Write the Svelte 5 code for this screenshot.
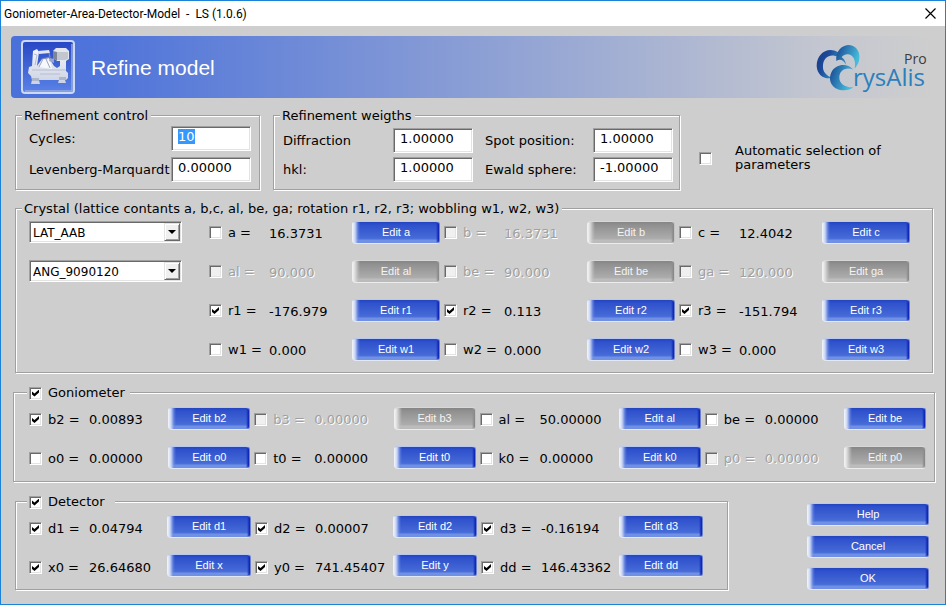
<script>
  import { onMount } from 'svelte';

  let cyclesInput;

  onMount(() => {
    cyclesInput.focus();
    cyclesInput.select();
  });

  const p = (name, value, checked = false, disabled = false, edit = name) => ({
    name, value, checked, disabled, edit
  });

  const crystal = [
    p('a', '16.3731'), p('b', '16.3731', false, true), p('c', '12.4042'),
    p('al', '90.000', false, true), p('be', '90.000', false, true), p('ga', '120.000', false, true),
    p('r1', '-176.979', true), p('r2', '0.113', true), p('r3', '-151.794', true),
    p('w1', '0.000'), p('w2', '0.000'), p('w3', '0.000')
  ];

  const goniometer = [
    p('b2', '0.00893', true), p('b3', '0.00000', false, true), p('al', '50.00000'), p('be', '0.00000'),
    p('o0', '0.00000'), p('t0', '0.00000'), p('k0', '0.00000'), p('p0', '0.00000', false, true)
  ];

  const detector = [
    p('d1', '0.04794', true), p('d2', '0.00007', true), p('d3', '-0.16194', true),
    p('x0', '26.64680', true, false, 'x'), p('y0', '741.45407', true, false, 'y'), p('dd', '146.43362', true)
  ];
</script>

{#snippet params(list)}
  {#each list as item}
    <div class="param" class:off={item.disabled}>
      <label>
        <input type="checkbox" checked={item.checked} disabled={item.disabled} />
        <span>{item.name} =</span>
      </label>
      <span class="value">{item.value}</span>
      <button type="button" class="btn" disabled={item.disabled}>Edit {item.edit}</button>
    </div>
  {/each}
{/snippet}

<div class="window">
  <div class="titlebar">
    <span class="title">Goniometer-Area-Detector-Model&nbsp; -&nbsp; LS (1.0.6)</span>
    <button type="button" class="close" aria-label="Close">
      <svg width="11" height="11" viewBox="0 0 11 11"><path d="M.5 .5l10 10M10.5 .5l-10 10" stroke="#000" stroke-width="1.2" fill="none" /></svg>
    </button>
  </div>

  <header>
    <svg class="device" width="54" height="54" viewBox="0 0 54 54" aria-hidden="true">
      <defs>
        <linearGradient id="tile" x1="0" y1="0" x2="0" y2="1">
          <stop offset="0" stop-color="#2747c4" />
          <stop offset="1" stop-color="#5b83e6" />
        </linearGradient>
        <linearGradient id="metal" x1="0" y1="0" x2="0" y2="1">
          <stop offset="0" stop-color="#f4f5f9" />
          <stop offset="1" stop-color="#ccd2e2" />
        </linearGradient>
      </defs>
      <rect x="1" y="1" width="52" height="52" rx="3" fill="url(#tile)" stroke="#ccd8f4" stroke-width="2" />
      <path d="M51 4v47H4" fill="none" stroke="#97a9dc" stroke-width="1.5" />
      <path d="M8 27l3-1 1-15 4-2 2 3-2 14 5-7 7-1 5 8 3 2 3-2v-5h6v10l2 2v5l-2 2h-1l1 3h-8l1-3H18l1 4h-9l1-4-1-4-3-3z" fill="url(#metal)" />
      <path d="M11 38h7v3H11zM38 37h7v3h-7z" fill="#aeb6cb" />
      <path d="M17 11l11-1 1 3-11 1z" fill="#dfe4f0" />
      <path d="M28 13l1 4-8 2" fill="none" stroke="#7f8bb0" stroke-width="1.2" />
      <path d="M18 27l4-8 7 1 2 9z" fill="#f7f8fb" />
      <path d="M22 19l-4 8M25 19l4 9" stroke="#9ba5c2" fill="none" />
      <path d="M32 11l3-3h10l3 3v8l-3 2H36l-4-3z" fill="#e4e6ec" />
      <path d="M32 11l4 1v9l-4-3z" fill="#7d8598" />
      <path d="M36 12h11v7l-3 1h-8z" fill="#c2c6cf" />
      <path d="M29 18l4 1v4l-5-2z" fill="#9aa5c8" />
      <path d="M11 30h34M19 34h20" stroke="#b6bdd1" fill="none" />
      <path d="M13 14l3 1-2 10" stroke="#b4bcd0" fill="none" />
    </svg>
    <h1>Refine model</h1>
    <svg class="logo" width="120" height="56" viewBox="0 0 120 56" role="img" aria-label="CrysAlis Pro">
      <defs>
        <linearGradient id="swirl-a" x1="0" y1="0" x2="1" y2="0.6">
          <stop offset="0" stop-color="#173a86" />
          <stop offset="0.5" stop-color="#1d4c9a" />
          <stop offset="1" stop-color="#2f93c9" />
        </linearGradient>
        <linearGradient id="swirl-b" x1="0" y1="0" x2="1" y2="0.4">
          <stop offset="0" stop-color="#17438f" />
          <stop offset="1" stop-color="#46bcdc" />
        </linearGradient>
      </defs>
      <g transform="scale(0.3333)">
        <path d="M84 40C54 20 20 44 20 80c1 26 20 42 48 37C48 110 37 98 39 78C41 54 62 42 84 54z" fill="url(#swirl-a)" />
        <path d="M79 66C76 38 94 18 118 18c34 4 40 46 16 71C139 62 128 46 113 46C104 46 98 50 95 55C102 60 107 66 108 77C100 64 91 58 79 66z" fill="url(#swirl-b)" />
        <path d="M130 92C110 70 78 76 65 98c-14 28 3 56 38 56c11 0 20-3 27-9C104 146 87 133 88 114C89 94 108 82 130 92z" fill="url(#swirl-b)" />
      </g>
      <text x="94" y="25" font-size="14" fill="#3c3c3c">Pro</text>
      <text x="43" y="47" font-size="24" fill="#2a80bd">rysAlis</text>
    </svg>
  </header>

  <main>
    <div class="top">
      <fieldset class="control">
        <legend>Refinement control</legend>
        <div class="fields">
          <label for="cycles">Cycles:</label>
          <input id="cycles" type="text" value="10" bind:this={cyclesInput} />
          <label for="lm">Levenberg-Marquardt</label>
          <input id="lm" type="text" value="0.00000" />
        </div>
      </fieldset>

      <fieldset class="weights">
        <legend>Refinement weigths</legend>
        <div class="fields">
          <label for="diffraction">Diffraction</label>
          <input id="diffraction" type="text" value="1.00000" />
          <label for="spot">Spot position:</label>
          <input id="spot" type="text" value="1.00000" />
          <label for="hkl">hkl:</label>
          <input id="hkl" type="text" value="1.00000" />
          <label for="ewald">Ewald sphere:</label>
          <input id="ewald" type="text" value="-1.00000" />
        </div>
      </fieldset>

      <label class="auto">
        <input type="checkbox" />
        <span>Automatic selection of parameters</span>
      </label>
    </div>

    <fieldset class="crystal">
      <legend>Crystal (lattice contants a, b,c, al, be, ga; rotation r1, r2, r3; wobbling w1, w2, w3)</legend>
      <div class="crystal-body">
        <div class="combos">
          <span class="combo">
            <select aria-label="Lattice constraint"><option>LAT_AAB</option></select>
          </span>
          <span class="combo">
            <select aria-label="Angle constraint"><option>ANG_9090120</option></select>
          </span>
        </div>
        <div class="params three">{@render params(crystal)}</div>
      </div>
    </fieldset>

    <fieldset class="goniometer">
      <legend><label><input type="checkbox" checked /><span>Goniometer</span></label></legend>
      <div class="params four">{@render params(goniometer)}</div>
    </fieldset>

    <div class="bottom">
      <fieldset class="detector">
        <legend><label><input type="checkbox" checked /><span>Detector</span></label></legend>
        <div class="params three">{@render params(detector)}</div>
      </fieldset>
      <div class="actions">
        <button type="button" class="btn">Help</button>
        <button type="button" class="btn">Cancel</button>
        <button type="button" class="btn">OK</button>
      </div>
    </div>
  </main>
</div>

<style>
  :global(body) {
    margin: 0;
    background: #cecece;
  }

  .window {
    box-sizing: border-box;
    min-height: 100vh;
    border: 1px solid #1a82d8;
    background: #cecece;
    color: #000;
    font: 13px/16px "DejaVu Sans", Verdana, sans-serif;
  }

  .titlebar {
    display: flex;
    align-items: center;
    justify-content: space-between;
    height: 25px;
    padding: 0 9px 0 3px;
    background: #fff;
    font: 12px/16px Roboto, "Segoe UI", sans-serif;
    white-space: pre;
  }

  .close {
    display: flex;
    padding: 0;
    border: 0;
    background: none;
  }

  header {
    display: flex;
    align-items: center;
    height: 62px;
    margin: 10px 10px 0;
    padding-left: 10px;
    border-radius: 4px 0 0 4px;
    background: linear-gradient(90deg, #4a70da 0%, #4f74da 10%, #c4c7d0 88%, #cecece 100%);
  }

  h1 {
    flex: 1;
    margin: 0 0 0 16px;
    padding-top: 2px;
    color: #fff;
    font: 21px/24px "Liberation Sans", Arial, sans-serif;
  }

  .logo {
    margin-right: 5px;
    font-family: "Open Sans", "Segoe UI", sans-serif;
  }

  main {
    padding: 9px 10px 0 12px;
  }

  fieldset {
    min-width: 0;
    box-sizing: border-box;
    margin: 0;
    border: 1px solid #a0a0a0;
    box-shadow: 1px 1px #fff, inset 1px 1px #fff;
  }

  legend {
    height: 16px;
    padding: 0 3px 0 2px;
    background: #cecece;
    line-height: 18px;
    white-space: nowrap;
  }

  legend label,
  .param label {
    display: flex;
    align-items: center;
    gap: 6px;
  }

  .top {
    display: flex;
    margin: 0 0 10px 2px;
  }

  .control {
    flex: 0 0 245px;
    padding: 3px 8px 7px 6px;
  }

  .control .fields {
    display: grid;
    grid-template-columns: 1fr 80px;
    row-gap: 6px;
    align-items: center;
    padding-left: 7px;
  }

  .weights {
    flex: 0 0 407px;
    margin-left: 13px;
    padding: 5px 6px 7px 6px;
  }

  .weights .fields {
    display: grid;
    grid-template-columns: 1fr 80px 120px 80px;
    row-gap: 4px;
    align-items: center;
    padding-left: 3px;
  }

  .weights .fields label:nth-of-type(even) {
    padding-left: 12px;
  }

  label {
    white-space: nowrap;
  }

  input[type="text"] {
    box-sizing: border-box;
    width: 80px;
    height: 25px;
    padding: 0 4px 5px 6px;
    border: 1px solid;
    border-color: #a0a0a0 #fff #fff #a0a0a0;
    border-radius: 0;
    outline: 0;
    background: #fff;
    box-shadow: inset 1px 1px #696969, inset -1px -1px #e3e3e3;
    color: #000;
    font: inherit;
  }

  input::selection {
    background: #3399ff;
    color: #fff;
  }

  input[type="checkbox"] {
    position: relative;
    flex: none;
    box-sizing: border-box;
    appearance: none;
    width: 13px;
    height: 13px;
    margin: 0;
    border: 1px solid;
    border-color: #a0a0a0 #fff #fff #a0a0a0;
    background: #fff;
    box-shadow: inset 1px 1px #696969, inset -1px -1px #e3e3e3;
  }

  input[type="checkbox"]:checked::after {
    content: "";
    position: absolute;
    inset: 2px;
    background: #000;
    clip-path: polygon(0 29%, 36% 57%, 100% 0, 100% 43%, 36% 100%, 0 71%);
  }

  input[type="checkbox"]:disabled {
    background: #f0f0f0;
  }

  .auto {
    display: flex;
    align-items: center;
    gap: 23px;
    flex: 1;
    padding: 19px 40px 0 19px;
    line-height: 14px;
    white-space: normal;
  }

  .crystal {
    margin: 0 2px 11px;
    padding: 5px 22px 11px 6px;
  }

  .crystal-body {
    display: flex;
    gap: 27px;
    padding-left: 7px;
  }

  .combos {
    display: flex;
    flex: 0 0 153px;
    flex-direction: column;
    gap: 17px;
  }

  .combo {
    position: relative;
    display: block;
    height: 22px;
  }

  select {
    box-sizing: border-box;
    display: block;
    width: 100%;
    height: 22px;
    padding: 2px 20px 0 3px;
    appearance: none;
    border: 1px solid;
    border-color: #a0a0a0 #fff #fff #a0a0a0;
    border-radius: 0;
    background: #fff;
    box-shadow: inset 1px 1px #696969, inset -1px -1px #e3e3e3;
    color: #000;
    font: 12px/16px "DejaVu Sans", Verdana, sans-serif;
  }

  .combo::before {
    content: "";
    position: absolute;
    top: 2px;
    right: 2px;
    bottom: 2px;
    box-sizing: border-box;
    width: 16px;
    border: 1px solid;
    border-color: #e3e3e3 #696969 #696969 #e3e3e3;
    background: #f0f0f0;
    box-shadow: inset 1px 1px #fff, inset -1px -1px #a0a0a0;
    pointer-events: none;
  }

  .combo::after {
    content: "";
    position: absolute;
    top: 9px;
    right: 6px;
    border: 4px solid transparent;
    border-top-color: #000;
    border-bottom: 0;
    pointer-events: none;
  }

  .params {
    display: grid;
    flex: 1;
    gap: 16px 4px;
  }

  .three {
    grid-template-columns: repeat(3, 1fr);
  }

  .four {
    grid-template-columns: repeat(4, 1fr);
  }

  .param {
    display: grid;
    grid-template-columns: 60px 1fr 82px;
    align-items: center;
    height: 23px;
    white-space: nowrap;
  }

  .crystal .param {
    grid-template-columns: 60px 1fr 88px;
  }

  .detector .param {
    grid-template-columns: 60px 1fr 84px;
  }

  .value {
    padding-top: 2px;
  }

  .off {
    color: #a0a0a0;
    text-shadow: 1px 1px #fff;
  }

  .goniometer {
    margin-bottom: 11px;
    padding: 7px 8px 12px 13px;
  }

  .goniometer .params,
  .detector .params {
    padding-left: 2px;
  }

  .goniometer .param label,
  .goniometer .value {
    padding-top: 2px;
  }

  .goniometer legend {
    padding: 0 5px 0 2px;
  }

  .detector legend {
    padding: 0 10px 0 2px;
  }

  .bottom {
    display: flex;
    gap: 79px;
    padding: 0 6px 0 2px;
  }

  .detector {
    flex: 1;
    padding: 6px 24px 11px 11px;
  }

  .detector .param label,
  .detector .value {
    padding-top: 4px;
  }

  .actions {
    display: flex;
    flex: 0 0 122px;
    flex-direction: column;
    gap: 9px;
    padding-top: 10px;
  }

  .btn {
    box-sizing: border-box;
    width: 100%;
    height: 23px;
    padding: 0 0 1px;
    border: 1px solid;
    border-color: #b9c8f0 #6c80d0 #e2e8f6 #eef1f8;
    border-radius: 4px;
    background:
      linear-gradient(90deg, #e8edf9 0, #c9d5f4 2px, rgba(110, 140, 226, 0.6) 5px, transparent 7px),
      linear-gradient(270deg, #0a20b8 0, #1730bc 1px, transparent 3px),
      linear-gradient(#2444c0 0, #2f51cc 3px, #4468d6 15px, #4a70da 17px, #7290e4 18px, #6f90e4 100%);
    color: #fff;
    font: 11px/14px "Liberation Sans", Arial, sans-serif;
    text-align: center;
  }

  .btn:disabled {
    border-color: #d8d8d8 #c4c4c4 #ececec #f0f0f0;
    background:
      linear-gradient(90deg, #f0f0f0 0, #dadada 2px, rgba(190, 190, 190, 0.6) 5px, transparent 7px),
      linear-gradient(270deg, #858585 0, #8d8d8d 1px, transparent 3px),
      linear-gradient(#858585 0, #909090 3px, #adadad 17px, #bdbdbd 18px, #bababa 100%);
    color: #f4f4f4;
    text-shadow: none;
  }
</style>
